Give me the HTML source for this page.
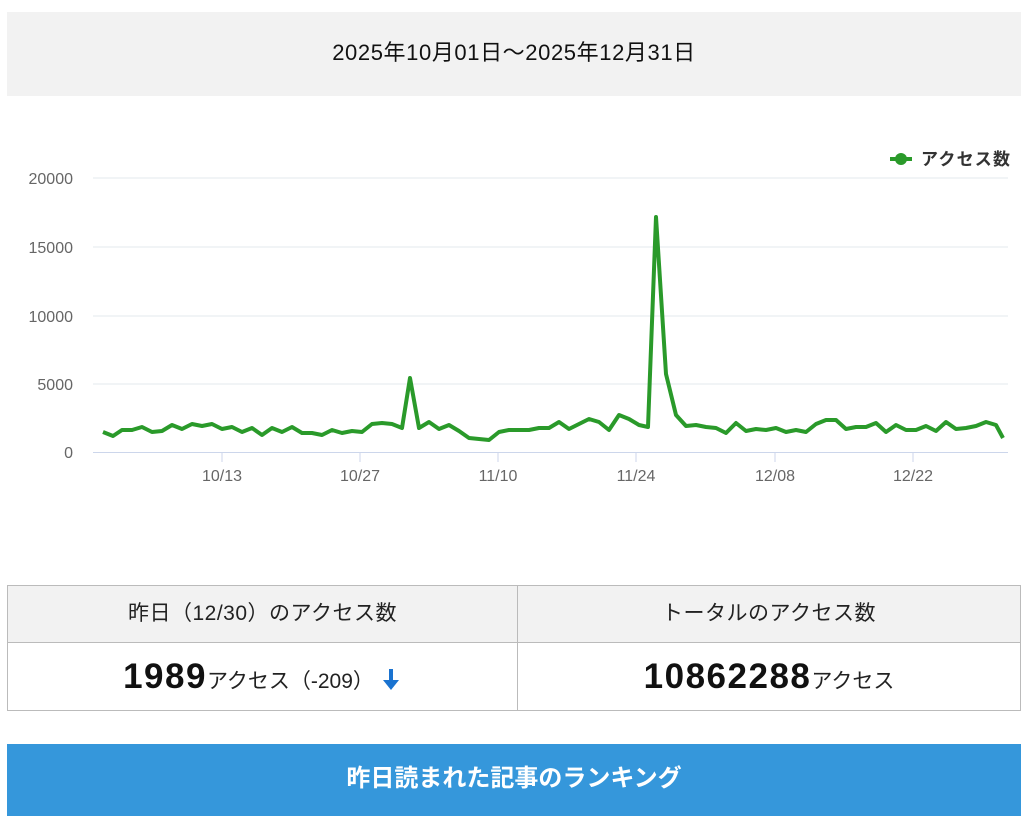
<!DOCTYPE html>
<html><head><meta charset="utf-8"><style>
body{margin:0;width:1021px;height:816px;background:#fff;font-family:"Liberation Sans","Noto Sans CJK JP",sans-serif;overflow:hidden;position:relative}
.top{position:absolute;left:7px;top:12px;width:1014px;height:84px;background:#f2f2f2;text-align:center;line-height:82px;font-size:22px;letter-spacing:0.6px;color:#111}
table{position:absolute;left:7px;top:585px;width:1014px;border-collapse:collapse}
td{border:1px solid #bbb;text-align:center;color:#222;padding:0;line-height:1.2}
.h td{background:#f2f2f2;height:56px;font-size:21px;letter-spacing:0.5px}
.b td{height:67px;font-size:21px}
.b b{font-size:35px;color:#111;letter-spacing:1.5px}
.bar{position:absolute;left:7px;top:744px;width:1014px;height:72px;background:#3597db;color:#fff;font-weight:bold;font-size:24px;text-align:center;line-height:70px}
</style></head><body>
<div class="top">2025年10月01日～2025年12月31日</div>
<svg style="position:absolute;left:0;top:100px" width="1021" height="400" viewBox="0 100 1021 400">
<g stroke="#e3e8ee" stroke-width="1">
<line x1="93" y1="178" x2="1008" y2="178"/><line x1="93" y1="247" x2="1008" y2="247"/><line x1="93" y1="316" x2="1008" y2="316"/><line x1="93" y1="384" x2="1008" y2="384"/>
</g>
<line x1="93" y1="452.5" x2="1008" y2="452.5" stroke="#ccd6eb"/>
<g stroke="#ccd6eb"><line x1="222" y1="452" x2="222" y2="462"/><line x1="360" y1="452" x2="360" y2="462"/><line x1="498" y1="452" x2="498" y2="462"/><line x1="636" y1="452" x2="636" y2="462"/><line x1="775" y1="452" x2="775" y2="462"/><line x1="913" y1="452" x2="913" y2="462"/></g>
<g font-family="Liberation Sans,sans-serif" font-size="16" fill="#666" text-anchor="end">
<text x="73" y="184">20000</text><text x="73" y="253">15000</text><text x="73" y="322">10000</text><text x="73" y="390">5000</text><text x="73" y="458">0</text></g>
<g font-family="Liberation Sans,sans-serif" font-size="16" fill="#666" text-anchor="middle">
<text x="222" y="481">10/13</text><text x="360" y="481">10/27</text><text x="498" y="481">11/10</text><text x="636" y="481">11/24</text><text x="775" y="481">12/08</text><text x="913" y="481">12/22</text></g>
<polyline fill="none" stroke="#2a9a2a" stroke-width="4" stroke-linejoin="round" points="103,432 113,436 122,430 132,430 142,427 152,432 162,431 172,425 182,429 192,424 202,426 212,424 222,429 232,427 242,432 252,428 262,435 272,428 282,432 292,427 302,433 312,433 322,435 332,430 342,433 352,431 362,432 372,424 382,423 392,424 402,428 410,378 419,428 429,422 439,429 449,425 459,431 469,438 479,439 489,440 499,432 509,430 519,430 529,430 539,428 549,428 559,422 569,429 579,424 589,419 599,422 609,430 619,415 629,419 639,425 648,427 656,217 666,374 676,415 686,426 696,425 706,427 716,428 726,433 736,423 746,431 756,429 766,430 776,428 786,432 796,430 806,432 816,424 826,420 836,420 846,429 856,427 866,427 876,423 886,432 896,425 906,430 916,430 926,426 936,431 946,422 956,429 966,428 976,426 986,422 996,425 1003,438"/>
<line x1="890" y1="159" x2="912" y2="159" stroke="#2a9a2a" stroke-width="4"/><circle cx="901" cy="159" r="6" fill="#2a9a2a"/>
<text x="921" y="165" font-family="Noto Sans CJK JP,sans-serif" font-size="17" font-weight="bold" fill="#333" textLength="89">アクセス数</text>
</svg>
<table><tr class="h"><td style="width:509px">昨日（12/30）のアクセス数</td><td>トータルのアクセス数</td></tr>
<tr class="b"><td><b>1989</b>アクセス（-209）<svg width="22" height="26" viewBox="0 0 22 26" style="vertical-align:-5px;margin-left:6px"><path d="M11 2v16" stroke="#1a73d0" stroke-width="4"/><path d="M3 13l8 10 8-10z" fill="#1a73d0"/></svg></td><td><b>10862288</b>アクセス</td></tr></table>
<div class="bar">昨日読まれた記事のランキング</div>
</body></html>
